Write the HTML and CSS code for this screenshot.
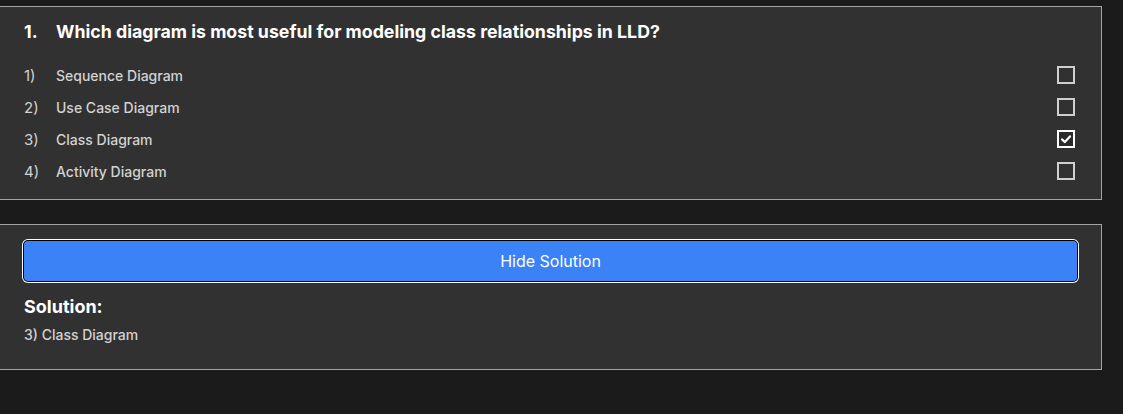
FILE: index.html
```html
<!DOCTYPE html>
<html>
<head>
<meta charset="utf-8">
<link rel="stylesheet" href="styles.css">
</head>
<body>
<section class="card question">
  <h2 class="q-title"><span class="q-num">1.</span><span>Which diagram is most useful for modeling class relationships in LLD?</span></h2>
  <ul class="options">
    <li class="option"><span class="opt-num">1)</span><span class="opt-text">Sequence Diagram</span><span class="box"></span></li>
    <li class="option"><span class="opt-num">2)</span><span class="opt-text">Use Case Diagram</span><span class="box"></span></li>
    <li class="option"><span class="opt-num">3)</span><span class="opt-text">Class Diagram</span><span class="box checked"><svg viewBox="0 0 14 14" width="14" height="14"><path d="M3 7.4 L5.8 10 L11 4.4" fill="none" stroke="#fff" stroke-width="2.2" stroke-linecap="round" stroke-linejoin="round"/></svg></span></li>
    <li class="option"><span class="opt-num">4)</span><span class="opt-text">Activity Diagram</span><span class="box"></span></li>
  </ul>
</section>
<section class="card solution">
  <button class="toggle">Hide Solution</button>
  <h3 class="sol-title">Solution:</h3>
  <p class="sol-text">3) Class Diagram</p>
</section>
</body>
</html>
```
FILE: styles.css
```css
* { box-sizing: border-box; }
html, body { margin: 0; padding: 0; }
body {
  background: #1b1b1b;
  font-family: Inter, "Noto Sans", sans-serif;
  color: #fff;
  padding-top: 6px;
}
.card {
  background: #313131;
  border: 1px solid #a3a3a3;
  width: 1103px;
  margin-left: -1px;
}
.question {
  padding: 12px 24px 12px 24px;
}
.q-title {
  margin: 0;
  font-size: 17.75px;
  font-weight: 700;
  line-height: 26px;
  display: flex;
}
.q-num { width: 32px; }
.options {
  list-style: none;
  margin: 14px 0 0 0;
  padding: 0;
}
.option {
  display: flex;
  align-items: center;
  height: 32px;
  font-size: 14px;
  font-weight: 500;
  color: #d2d2d2;
}
.opt-num { width: 32px; font-size: 15px; font-weight: 400; }
.opt-text { flex: 1; }
.box {
  width: 18px;
  height: 18px;
  border: 2px solid #cfcfcf;
  margin-right: 2px;
  display: flex;
  align-items: center;
  justify-content: center;
}
.box.checked {
  border-color: #fff;
  background: #2a2a2a;
}
.solution {
  margin-top: 24px;
  padding: 16px 24px 24px 24px;
}
.toggle {
  display: block;
  width: 100%;
  height: 40px;
  border: none;
  border-radius: 4px;
  background: #3b82f6;
  color: #fff;
  font-family: Inter, "Noto Sans", sans-serif;
  font-size: 16px;
  font-weight: 400;
  box-shadow: 0 0 0 1px #000, 0 0 0 2px #fff;
}
.sol-title {
  margin: 14px 0 0 0;
  font-size: 18px;
  font-weight: 700;
  line-height: 24px;
}
.sol-text {
  margin: 6px 0 0 0;
  font-size: 14px;
  font-weight: 500;
  line-height: 20px;
  color: #d2d2d2;
}
```
